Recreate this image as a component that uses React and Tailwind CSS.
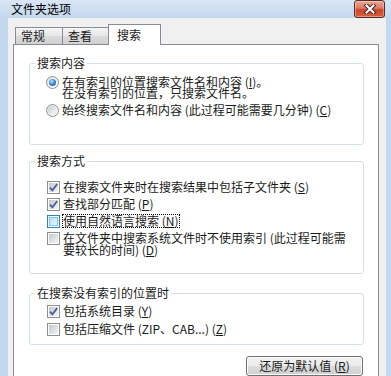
const font = "font-['Noto_Sans_CJK_SC','Noto_Sans',sans-serif]";

function Mn({ k }) {
  return (
    <>
      {' ('}
      <span className="underline underline-offset-1">{k}</span>
      {')'}
    </>
  );
}

function Radio({ checked, className = '' }) {
  return (
    <span
      className={`flex h-[13px] w-[13px] shrink-0 items-center justify-center rounded-full border border-[#8e8f8f] bg-gradient-to-br from-[#e2e2e2] to-white ${className}`}
    >
      {checked ? (
        <span className="h-[7px] w-[7px] rounded-full bg-[radial-gradient(circle_at_40%_35%,#b8e6ff_0%,#3c8fd6_45%,#1a4f8e_100%)]" />
      ) : (
        <span className="h-[9px] w-[9px] rounded-full bg-gradient-to-br from-[#c9cdd2] to-[#f9f9f9]" />
      )}
    </span>
  );
}

function CheckBox({ checked, hover }) {
  return (
    <span
      className={`relative flex h-[13px] w-[13px] shrink-0 items-center justify-center border bg-white ${
        hover ? 'border-[#3c7fb1]' : 'border-[#8e8f8f]'
      }`}
    >
      <span
        className={`h-[9px] w-[9px] bg-gradient-to-br ${
          hover ? 'border border-[#79c6f9] from-[#b1dffd] to-[#ebf8fe]' : 'from-[#c4c8cd] to-[#f4f4f4]'
        }`}
      />
      {checked && (
        <svg className="absolute left-[-1px] top-[-1px]" width="13" height="13" viewBox="0 0 13 13">
          <path d="M3 6.6l2.4 2.7L10.2 3" fill="none" stroke="#46609e" strokeWidth="1.8" />
        </svg>
      )}
    </span>
  );
}

function Group({ title, children, className = '' }) {
  return (
    <fieldset className={`ml-[15px] mr-[14px] rounded-[3px] border border-[#d5dfe5] ${className}`}>
      <legend className="ml-[5px] px-[2px] leading-[12px]">{title}</legend>
      {children}
    </fieldset>
  );
}

function Row({ control, children, className = '' }) {
  return (
    <div className={`flex items-start gap-[3px] leading-[12px] ${className}`}>
      {control}
      <span>{children}</span>
    </div>
  );
}

export default function App() {
  return (
    <div className={`flex h-[376px] w-[391px] flex-col overflow-hidden bg-[#c3d7ee] ${font} text-[12px] text-[#1a1a1a]`}>
      {/* title bar */}
      <div className="flex h-[22px] items-center justify-between bg-[linear-gradient(to_bottom,#d9e6f5,#c4d8ee)] pl-[11px] pr-[6px]">
        <span className="leading-[12px] text-black">文件夹选项</span>
        <button className="flex h-[18px] w-[31px] items-center justify-center rounded-[3px] border border-[#5a2a25] bg-[linear-gradient(to_bottom,#eaa897_0%,#d97a63_45%,#c8472b_55%,#d5603f_100%)] shadow-[inset_0_0_0_1px_rgba(255,255,255,0.35)]">
          <svg width="14" height="10" viewBox="0 0 14 10">
            <path d="M3.5 1.5L10.5 8.5M10.5 1.5L3.5 8.5" stroke="#4a2a28" strokeWidth="4" strokeLinecap="square" />
            <path d="M3.5 1.5L10.5 8.5M10.5 1.5L3.5 8.5" stroke="#fff" strokeWidth="2" strokeLinecap="square" />
          </svg>
        </button>
      </div>

      {/* dialog body */}
      <div className="ml-[8px] mr-[5px] flex flex-1 flex-col bg-[#f0f0f0] pl-[5px] pr-[7px] pt-[6px]">
        <div className="relative z-10 mb-[-1px] flex h-[21px] items-end pl-[2px]">
          <div className="mb-[1px] flex h-[17px] w-[48px] items-center border border-b-0 border-[#898c95] bg-[linear-gradient(to_bottom,#f5f5f5,#e6e6e6_50%,#dadada_50%,#d2d2d2)] pl-[5px] leading-[12px]">
            常规
          </div>
          <div className="mb-[1px] flex h-[17px] w-[47px] items-center border border-b-0 border-l-0 border-[#898c95] bg-[linear-gradient(to_bottom,#f5f5f5,#e6e6e6_50%,#dadada_50%,#d2d2d2)] pl-[5px] leading-[12px]">
            查看
          </div>
          <div className="relative ml-[-2px] flex h-[21px] w-[53px] items-center border border-b-0 border-[#898c95] bg-white pb-[1px] pl-[8px] leading-[12px]">
            搜索
          </div>
        </div>

        <div className="flex flex-col border border-[#898c95] bg-white pb-[10px] pt-[12px]">
          <Group title="搜索内容">
            <div className="flex flex-col gap-[6px] pb-[27px] pl-[16px] pt-[7px]">
              <div className="flex items-start gap-[3px] leading-[11px]">
                <Radio checked />
                <span>
                  在有索引的位置搜索文件名和内容<Mn k="I" />。
                  <br />
                  在没有索引的位置，只搜索文件名。
                </span>
              </div>
              <Row control={<Radio />}>
                始终搜索文件名和内容 (此过程可能需要几分钟)<Mn k="C" />
              </Row>
            </div>
          </Group>

          <Group title="搜索方式" className="mt-[10px]">
            <div className="flex flex-col gap-[4px] pb-[17px] pl-[17px] pt-[14px]">
              <Row control={<CheckBox checked />}>
                在搜索文件夹时在搜索结果中包括子文件夹<Mn k="S" />
              </Row>
              <Row control={<CheckBox checked />}>
                查找部分匹配<Mn k="P" />
              </Row>
              <div className="flex items-start gap-[3px] leading-[12px]">
                <CheckBox hover />
                <span className="inline-block outline-1 outline-dotted outline-black">
                  使用自然语言搜索<Mn k="N" />
                </span>
              </div>
              <Row control={<CheckBox />}>
                在文件夹中搜索系统文件时不使用索引 (此过程可能需
                <br />
                要较长的时间)<Mn k="D" />
              </Row>
            </div>
          </Group>

          <Group title="在搜索没有索引的位置时" className="mt-[13px]">
            <div className="flex flex-col gap-[5px] pb-[8px] pl-[17px] pt-[6px]">
              <Row control={<CheckBox checked />}>
                包括系统目录<Mn k="Y" />
              </Row>
              <Row control={<CheckBox />}>
                包括压缩文件 (ZIP、CAB...)<Mn k="Z" />
              </Row>
            </div>
          </Group>

          <div className="mr-[15px] mt-[11px] flex justify-end">
            <button className="flex h-[20px] w-[117px] items-center justify-center rounded-[3px] border border-[#707070] bg-[linear-gradient(to_bottom,#f2f2f2_0%,#ebebeb_50%,#dddddd_50%,#cfcfcf_100%)] leading-[12px] shadow-[inset_0_0_0_1px_#fbfbfb]">
              还原为默认值<Mn k="R" />
            </button>
          </div>
        </div>
      </div>
    </div>
  );
}
